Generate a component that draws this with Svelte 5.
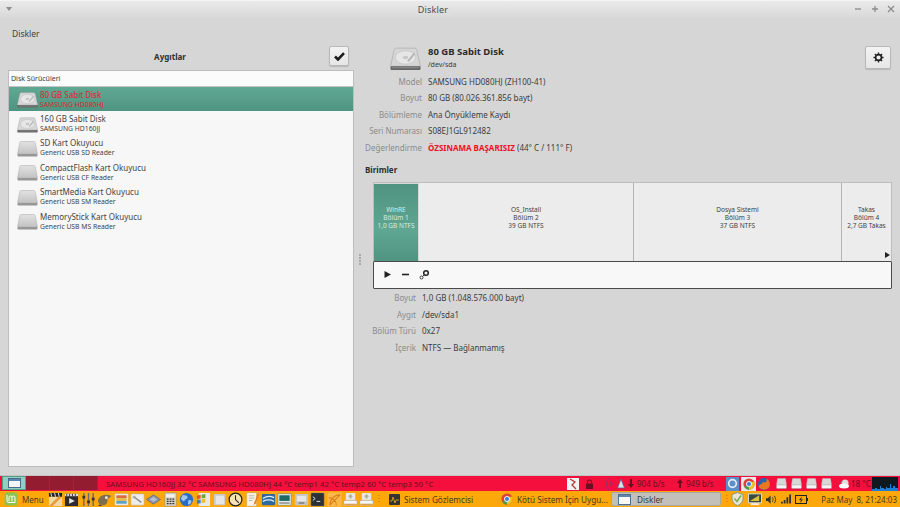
<script>
	const drives = [
		{ name: '80 GB Sabit Disk', model: 'SAMSUNG HD080HJ', hdd: true, selected: true },
		{ name: '160 GB Sabit Disk', model: 'SAMSUNG HD160JJ', hdd: true },
		{ name: 'SD Kart Okuyucu', model: 'Generic USB SD Reader' },
		{ name: 'CompactFlash Kart Okuyucu', model: 'Generic USB CF Reader' },
		{ name: 'SmartMedia Kart Okuyucu', model: 'Generic USB SM Reader' },
		{ name: 'MemoryStick Kart Okuyucu', model: 'Generic USB MS Reader' }
	];
	const parts = [
		{ lines: ['WinRE', 'Bölüm 1', '1,0 GB NTFS'], width: 44, active: true },
		{ lines: ['OS_Install', 'Bölüm 2', '39 GB NTFS'], width: 215 },
		{ lines: ['Dosya Sistemi', 'Bölüm 3', '37 GB NTFS'], width: 208 },
		{ lines: ['Takas', 'Bölüm 4', '2,7 GB Takas'], width: 50 }
	];
	const drive16 = `<rect x="3" y="1" width="10" height="8" rx="1" fill="#e6e6e6"/><path d="M8 2l2.500 3H9v2H7V5H5.500z" fill="#a9a9a9"/><rect x="1" y="9" width="14" height="5" rx="1" fill="#f6f6f6" stroke="#a0a0a0" stroke-width=".5"/><rect x="1.500" y="12.500" width="13" height="1.500" fill="#d8a050"/>`;
	// launcher icons on the bottom panel, inner svg markup on a 16x16 box
	const launchers = [
		`<path d="M1 5h14v10H1z" fill="#f0d8a8"/><path d="M1 15L11 5h4L5 15z" fill="#e59a3c"/><path d="M1 1h14v4H1z" fill="#222"/><path d="M3 1l1 4M7 1l1 4M11 1l1 4" stroke="#eee"/>`,
		`<rect x="1" y="2" width="14" height="13" fill="#2c2c30"/><path d="M1 2h14v2.500H1z" fill="#ddd"/><path d="M3 2v2.500M6 2v2.500M9 2v2.500M12 2v2.500" stroke="#333"/><path d="M5.500 6.500l6 3-6 3z" fill="#e8e8e8"/>`,
		`<path d="M3 1v14M8 1v14M13 1v14" stroke="#6b6b6b" stroke-width="1.500"/><rect x="1.500" y="4" width="3" height="3" fill="#333"/><rect x="6.500" y="9" width="3" height="3" fill="#333"/><rect x="11.500" y="6" width="3" height="3" fill="#333"/>`,
		`<path d="M1 9c2-6 9-7 14-5-1 2-2 3-4 3 1 4-1 7-4 7-4 0-6-2-6-5z" fill="#7c6f50"/><circle cx="10" cy="6" r="1.500" fill="#eee"/><path d="M3 13l-2 2h5" fill="#444"/>`,
		`<rect x="1" y="2" width="14" height="12" fill="#f0efe9" stroke="#bbb" stroke-width=".5"/><rect x="2.500" y="3.500" width="11" height="3" fill="#dc6a42"/><rect x="2.500" y="6.500" width="11" height="3" fill="#e7bb4a"/><rect x="2.500" y="9.500" width="11" height="3" fill="#5aa0c8"/>`,
		`<rect x="1" y="2" width="14" height="12" rx="1" fill="#ececec" stroke="#b0b0b0" stroke-width=".5"/><path d="M4 5l8 6" stroke="#8a8a8a" stroke-width="1.500"/><circle cx="4.500" cy="5.500" r="1.500" fill="#aaa"/>`,
		`<path d="M8 3l7.500 5L8 13 .5 8z" fill="#8793a8" stroke="#4c5870" stroke-width=".6"/><path d="M8 5l4 3-4 2.500L4 8z" fill="#b5bfd0"/>`,
		`<rect x="2" y="1" width="12" height="14" fill="#d8d4c8" stroke="#8a8a80" stroke-width=".5"/><rect x="3.500" y="2.500" width="9" height="3" fill="#f2f2ea"/><path d="M4 7.500h2M7 7.500h2M10 7.500h2M4 10h2M7 10h2M10 10h2M4 12.500h2M7 12.500h2M10 12.500h2" stroke="#333" stroke-width="1.300"/>`,
		`<circle cx="8" cy="8" r="7" fill="#2a6cc4"/><path d="M4 3c2 1 4 0 5 2s-2 2-3 4-3 0-4-2zM10 9c2-1 4 0 3 2s-2 3-3 2 0-3 0-4z" fill="#9cc8f0"/>`,
		`<rect x="3" y="1" width="12" height="14" fill="#e8e8e8"/><path d="M1 4l4-1v4l-4 .500z" fill="#e0562c"/><path d="M6 3l4-1v4l-4 1z" fill="#6aa83c"/><path d="M1 8.500l4-.500v4l-4 .500z" fill="#3c7cd0"/><path d="M6 8l4-1v4l-4 1z" fill="#f0bc28"/>`,
		`<rect x="2" y="2" width="12" height="12" rx="1" fill="#c8c8c8"/><rect x="4" y="4" width="9" height="9" fill="#e6e6e6"/>`,
		`<circle cx="8" cy="8" r="6.800" fill="#f6e4b0" stroke="#222" stroke-width="1.300"/><path d="M8 3.500V8l3.500 3.500" fill="none" stroke="#222" stroke-width="1.100"/>`,
		`<rect x="2" y="1" width="10" height="14" fill="#f8f4e8" stroke="#b8b0a0" stroke-width=".5"/><path d="M4 4h6M4 6.500h6M4 9h4" stroke="#b8b0a0"/><path d="M14 1l-4 10-1 3 2.500-2L15 2z" fill="#e8781c"/>`,
		`<rect x="1" y="2" width="14" height="12" rx="1" fill="#2c699c"/><path d="M2 7c4-3 8-3 12-1M2 10c4-2 8-2 12 0" fill="none" stroke="#e0ecf4" stroke-width="1.300"/>`,
		`<rect x="1" y="2" width="14" height="12" fill="#e4ece8" stroke="#5a7a78" stroke-width=".5"/><rect x="2.500" y="3.500" width="11" height="6" fill="#1f6a66"/><rect x="2.500" y="11" width="11" height="1.500" fill="#888"/>`,
		`<rect x="1" y="2" width="14" height="12" rx="1" fill="#c4c4c4"/><rect x="3" y="4" width="10" height="6" fill="#e6e6e6"/><rect x="5" y="11" width="6" height="1.500" fill="#777"/>`,
		`<rect x="1" y="1" width="14" height="14" rx="1" fill="#2a3238" stroke="#777" stroke-width=".5"/><path d="M3 5l2.500 2L3 9" fill="none" stroke="#eee"/><path d="M7 10h4" stroke="#eee"/>`,
		`<rect x=".5" y=".5" width="15" height="15" fill="#f8b84c"/><path d="M3 14C3 8 8 3 14 3M3 14l11-11M2 6c4 0 8 4 8 8" fill="none" stroke="#e07c14" stroke-width="1.100"/>`,
		drive16,
		drive16
	];
</script>

{#snippet hddIcon(w, h)}
	<svg width={w} height={h} viewBox="0 0 30 22">
		<path d="M6 .5h18c1 0 1.500.6 2 2l3.500 15.500H.5L4 2.500c.5-1.400 1-2 2-2z" fill="#d6d6d6" stroke="#a6a6a6" stroke-width=".6" />
		<ellipse cx="15" cy="9.500" rx="10" ry="6.500" fill="#e6e6e6" stroke="#bcbcbc" stroke-width=".6" />
		<ellipse cx="15" cy="9.500" rx="2.600" ry="1.700" fill="#c6c6c6" />
		<path d="M23 5l-6.500 8 1.800.6 6-7.400z" fill="#b4b4b4" />
		<rect x=".5" y="18" width="29" height="3.600" rx="1" fill="#666" />
		<rect x="2" y="19" width="26" height="1" fill="#8d8d8d" />
	</svg>
{/snippet}

{#snippet cardIcon()}
	<svg width="21" height="16" viewBox="0 0 21 16">
		<defs>
			<linearGradient id="card" x1="0" y1="0" x2="0" y2="1">
				<stop offset="0" stop-color="#e2e2e2" />
				<stop offset="1" stop-color="#c2c2c2" />
			</linearGradient>
		</defs>
		<path d="M4 .5h13c.6 0 1 .4 1.200 1L20.500 13H.5L2.800 1.500C3 .9 3.400.5 4 .5z" fill="url(#card)" stroke="#b4b4b4" stroke-width=".6" />
		<rect x=".5" y="13" width="20" height="2.600" rx=".8" fill="#979797" />
	</svg>
{/snippet}

{#snippet gear(size)}
	<svg width={size} height={size} viewBox="0 0 12 12">
		<circle cx="6" cy="6" r="3.200" fill="none" stroke="#222" stroke-width="1.800" />
		<path d="M6 .5v2M6 9.500v2M.5 6h2M9.500 6h2M2.100 2.100l1.400 1.400M8.500 8.500l1.400 1.400M2.100 9.900l1.400-1.400M8.500 3.500l1.400-1.400" stroke="#222" stroke-width="1.500" />
	</svg>
{/snippet}

{#snippet drive()}
	<svg width="11" height="11" viewBox="0 0 11 11">
		<path d="M1.500 .5h8l1 6.500H.5z" fill="#d8d8d8" stroke="#b8b8b8" stroke-width=".4" />
		<rect x=".5" y="7" width="10" height="3.500" rx=".8" fill="#f4f4f4" stroke="#a0a0a0" stroke-width=".4" />
	</svg>
{/snippet}

{#snippet chrome(size)}
	<svg width={size} height={size} viewBox="0 0 16 16">
		<circle cx="8" cy="8" r="7.500" fill="#d9443a" />
		<path d="M8 8L1.500 11.800A7.500 7.500 0 0 0 8 15.500z" fill="#4aa04a" />
		<path d="M8 8v7.500A7.500 7.500 0 0 0 15 5H8z" fill="#f3c21e" />
		<circle cx="8" cy="8" r="3.400" fill="#3d7fd8" stroke="#fff" stroke-width="1.200" />
	</svg>
{/snippet}

<div class="screen">
	<main class="window">
		<header class="titlebar">
			<span class="menu-arrow"></span>
			<span class="title">Diskler</span>
			<div class="wm-buttons">
				<svg width="8" height="8" viewBox="0 0 8 8"><path d="M1 4h6" stroke="#8c8c8c" stroke-width="1.300" /></svg>
				<svg width="8" height="8" viewBox="0 0 8 8"><path d="M1 4h6M4 1v6" stroke="#8c8c8c" stroke-width="1.300" /></svg>
				<svg width="8" height="8" viewBox="0 0 8 8"><path d="M1 1l6 6M7 1l-6 6" stroke="#8c8c8c" stroke-width="1.300" /></svg>
			</div>
		</header>
		<nav class="menubar">Diskler</nav>

		<div class="content">
			<section class="devices">
				<div class="devices-head">
					<h2>Aygıtlar</h2>
					<button class="tool check" aria-label="Seç">
						<svg width="11" height="9" viewBox="0 0 11 9"><path d="M1 4.500l3 3 6-6.300" fill="none" stroke="#1c1c1c" stroke-width="2.600" /></svg>
					</button>
				</div>
				<div class="list">
					<div class="list-header">Disk Sürücüleri</div>
					{#each drives as d}
						<div class="row" class:selected={d.selected}>
							<span class="row-icon">
								{#if d.hdd}{@render hddIcon(21, 16)}{:else}{@render cardIcon()}{/if}
							</span>
							<div class="row-text">
								<div class="row-name">{d.name}</div>
								<div class="row-model">{d.model}</div>
							</div>
						</div>
					{/each}
				</div>
			</section>

			<div class="grip"><i></i><i></i><i></i><i></i></div>

			<section class="details">
				<div class="drive-head">
					<span class="drive-icon">{@render hddIcon(31, 24)}</span>
					<div class="drive-title">
						<strong>80 GB Sabit Disk</strong>
						<small>/dev/sda</small>
					</div>
					<button class="tool settings" aria-label="Ayarlar">{@render gear(11)}</button>
				</div>

				<dl class="props">
					<dt>Model</dt><dd>SAMSUNG HD080HJ (ZH100-41)</dd>
					<dt>Boyut</dt><dd>80 GB (80.026.361.856 bayt)</dd>
					<dt>Bölümleme</dt><dd>Ana Önyükleme Kaydı</dd>
					<dt>Seri Numarası</dt><dd>S08EJ1GL912482</dd>
					<dt>Değerlendirme</dt><dd><b>ÖZSINAMA BAŞARISIZ</b> (44° C / 111° F)</dd>
				</dl>

				<h3>Birimler</h3>

				<div class="volumes">
					<div class="bar">
						{#each parts as p}
							<div class="part" class:active={p.active} style="width:{p.width}px">
								{#each p.lines as line}<span>{line}</span>{/each}
							</div>
						{/each}
						<span class="more"></span>
					</div>
					<div class="vol-tools">
						<svg width="9" height="9" viewBox="0 0 9 9"><path d="M1.500 1l6.500 3.500L1.500 8z" fill="#222" /></svg>
						<svg width="9" height="9" viewBox="0 0 9 9"><path d="M1 4.500h7" stroke="#222" stroke-width="1.600" /></svg>
						<svg width="11" height="11" viewBox="0 0 11 11">
							<circle cx="7" cy="4" r="2.300" fill="none" stroke="#222" stroke-width="1.500" />
							<circle cx="2.500" cy="8.500" r="1.500" fill="none" stroke="#333" stroke-width=".9" />
							<path d="M3.500 7.500l2-2" stroke="#333" />
						</svg>
					</div>
				</div>

				<dl class="props sub">
					<dt>Boyut</dt><dd>1,0 GB (1.048.576.000 bayt)</dd>
					<dt>Aygıt</dt><dd>/dev/sda1</dd>
					<dt>Bölüm Türü</dt><dd>0x27</dd>
					<dt>İçerik</dt><dd>NTFS — Bağlanmamış</dd>
				</dl>
			</section>
		</div>
	</main>

	<footer class="panels">
		<div class="panel-top">
			<div class="workspaces">
				<span class="ws current">
					<svg width="13" height="10" viewBox="0 0 13 10"><rect x=".5" y=".5" width="12" height="9" fill="#f2f5f7" stroke="#4a6a88" /><rect x="1" y="1" width="11" height="2" fill="#5b86b0" /></svg>
				</span>
				<span class="ws"></span><span class="ws"></span><span class="ws"></span>
			</div>
			<div class="sensors">SAMSUNG HD160JJ 32 °C SAMSUNG HD080HJ 44 °C temp1 42 °C temp2 60 °C temp3 50 °C</div>
			<div class="top-right">
				<svg class="kill" width="12" height="12" viewBox="0 0 12 12"><rect width="12" height="12" fill="#f1f1f1" /><path d="M3 1l5 3-3 3 4 4" fill="none" stroke="#b23a3a" stroke-width="1.300" /></svg>
				<svg class="lock" width="7" height="10" viewBox="0 0 7 10"><path d="M1.500 4.500V3a2 2 0 0 1 4 0v1.500" fill="none" stroke="#6a0f22" stroke-width="1.100" /><rect y="4.500" width="7" height="5.500" fill="#6a0f22" /></svg>
				<div class="net">
					<svg class="arcs" width="8" height="14" viewBox="0 0 8 14"><path d="M3 1a8 8 0 0 0 0 12M5.500 3.500a5 5 0 0 0 0 7" fill="none" stroke="#a02868" /><circle cx="7" cy="7" r="1" fill="#a02868" /></svg>
					<svg class="wifi" width="8" height="11" viewBox="0 0 8 11"><path d="M4 1l3.500 9H.5z" fill="#d8dfe8" stroke="#4c5f90" stroke-width=".7" /></svg>
					<svg class="arrow" width="6" height="9" viewBox="0 0 6 9"><path d="M2 0h2v5h2L3 9 0 5h2z" fill="#6a0f22" /></svg>
					<span class="rate">904 b/s</span>
					<svg class="arrow up" width="6" height="9" viewBox="0 0 6 9"><path d="M2 9h2V4h2L3 0 0 4h2z" fill="#6a0f22" /></svg>
					<span class="rate">949 b/s</span>
				</div>
				<div class="apps">
					<span class="app-box blue"><svg width="11" height="11" viewBox="0 0 13 13"><circle cx="6.500" cy="6.500" r="4.500" fill="none" stroke="#e5eef8" stroke-width="2" /></svg></span>
					<span class="app-box chrome">{@render chrome(12)}</span>
					<span class="app-box fox"><svg width="14" height="14" viewBox="0 0 15 15"><circle cx="7.500" cy="7.500" r="6.500" fill="#2c63a8" /><path d="M2 10c1 4 8 5 11 1 2-4 0-8-3-9 1 2 0 4-2 4-2-1-3 0-3 2-2 0-2-1-3 2z" fill="#e8791f" /></svg></span>
				</div>
				<div class="drives">
					{@render drive()}{@render drive()}{@render drive()}{@render drive()}
				</div>
				<svg class="cloud" width="10" height="10" viewBox="0 0 10 10"><circle cx="6" cy="4" r="3.500" fill="#dcdcdc" /><ellipse cx="5" cy="7" rx="5" ry="2.500" fill="#fafafa" /><path d="M1 4l3-2.500" stroke="#777" stroke-width=".7" /></svg>
				<span class="temp">18 °C</span>
				<div class="graph">
					<svg width="26" height="13" viewBox="0 0 26 13" preserveAspectRatio="none"><path d="M0 13V11h3V10h2V11h3V8h1V10h3V11h2V9h1V10h3V6h1V10h2V8h2V10h3v3z" fill="#1c7fd8" /></svg>
				</div>
			</div>
		</div>
		<div class="panel-bottom">
			<div class="start">
				<svg width="14" height="14" viewBox="0 0 14 14"><rect x=".5" y=".5" width="13" height="13" rx="2.500" fill="#8cc251" /><path d="M3 3v5.500a2 2 0 0 0 2 2h6V5.500a1.500 1.500 0 0 0-3 0v4M8 5.500a1.500 1.500 0 0 0-3 0v3.500" fill="none" stroke="#fff" /></svg>
				<span>Menu</span>
			</div>
			<div class="launchers">
				{#each launchers as icon}
					<svg width="15" height="15" viewBox="0 0 16 16">{@html icon}</svg>
				{/each}
			</div>
			<span class="dots"></span>
			<div class="tasks">
				<div class="task monitor">
					<svg width="11" height="11" viewBox="0 0 11 11"><rect width="11" height="11" rx="1" fill="#333" /><path d="M1 7h2l1-4 2 6 1-3h3" fill="none" stroke="#e8b020" stroke-width=".8" /></svg>
					<span>Sistem Gözlemcisi</span>
				</div>
				<div class="task browser">
					{@render chrome(12)}
					<span>Kötü Sistem İçin Uygu...</span>
				</div>
				<div class="task active">
					<svg width="13" height="11" viewBox="0 0 13 11"><rect x=".5" y=".5" width="12" height="10" fill="#f6f8fa" stroke="#50708e" /><rect x="1" y="1" width="11" height="2" fill="#5b86b0" /></svg>
					<span>Diskler</span>
				</div>
			</div>
			<span class="dots tray-dots"></span>
			<div class="tray">
				<svg width="13" height="14" viewBox="0 0 13 14"><path d="M6.500 .5l5.500 2v4c0 3.500-2.500 6-5.500 7-3-1-5.500-3.500-5.500-7v-4z" fill="#e5e5da" stroke="#8a9a70" /><path d="M3.500 6.500l2.500 3 4-6" fill="none" stroke="#7bab3c" stroke-width="1.500" /></svg>
				<svg width="14" height="13" viewBox="0 0 15 13"><rect x=".5" y=".5" width="14" height="9.500" fill="#3a4a40" stroke="#ddd" /><path d="M2 8l10-6v6z" fill="#d8c23a" /><rect x="3" y="10.500" width="9" height="2" fill="#eee" /></svg>
				<svg width="11" height="11" viewBox="0 0 12 11"><path d="M0 4h2l3-3v9L2 7H0z" fill="#333" /><path d="M7 3c1 1.500 1 3.500 0 5M9 1.500c2 2.500 2 5.500 0 8" fill="none" stroke="#333" /></svg>
				<svg width="10" height="10" viewBox="0 0 11 10"><path d="M0 8h2v2H0zM3 6h2v4H3zM6 3h2v7H6zM9 0h2v10H9z" fill="#333" /></svg>
				<svg width="13" height="9" viewBox="0 0 13 9"><rect x=".5" y=".5" width="11" height="8" fill="none" stroke="#222" /><rect x="11.500" y="3" width="1.500" height="3" fill="#222" /><path d="M7 1.500L4 5h2l-1 3 3-3.500H6z" fill="#222" /></svg>
			</div>
			<time>Paz May  8, 21:24:03</time>
		</div>
	</footer>
</div>

<style>
	:global(body) {
		margin: 0;
		font-family: 'Noto Sans', sans-serif;
	}
	.screen {
		width: 900px;
		height: 507px;
		overflow: hidden;
		display: flex;
		flex-direction: column;
		background: #d6d6d6;
		color: #3a3a3a;
		font-size: 8px;
	}
	.window {
		flex: 1;
		min-height: 0;
		display: flex;
		flex-direction: column;
		background: #d6d6d6;
	}
	.titlebar {
		height: 18px;
		flex: none;
		display: flex;
		align-items: center;
		background: linear-gradient(#ebebeb, #d8d8d8);
		box-shadow: inset 0 1px #f4f4f4;
	}
	.menu-arrow {
		width: 0;
		height: 0;
		margin-left: 6px;
		border: 3px solid transparent;
		border-top: 4px solid #8d8d8d;
		border-bottom: 0;
	}
	.title {
		flex: 1;
		text-align: center;
		font-size: 9px;
		color: #4c4c4c;
		letter-spacing: 0.2px;
	}
	.wm-buttons {
		display: flex;
		gap: 8.500px;
		margin-right: 5px;
	}
	.menubar {
		height: 28px;
		flex: none;
		padding-left: 12px;
		line-height: 31px;
		font-size: 8.500px;
		color: #3f3f3f;
	}
	.content {
		flex: 1;
		min-height: 0;
		display: flex;
		padding: 0 8px 8px;
	}
	.devices {
		width: 346px;
		flex: none;
		display: flex;
		flex-direction: column;
	}
	.devices-head {
		height: 24px;
		flex: none;
		display: flex;
		align-items: center;
		position: relative;
		justify-content: center;
		padding-right: 22px;
	}
	h2 {
		margin: 0 0 4px;
		font-size: 8px;
		font-weight: 700;
		color: #2e2e2e;
	}
	.tool {
		padding: 0;
		display: flex;
		align-items: center;
		justify-content: center;
		border: 1px solid #b8b8b8;
		border-radius: 2px;
		background: linear-gradient(#f3f3f3, #e6e6e6);
		box-shadow: 0 1px 1px rgba(0, 0, 0, 0.15);
	}
	.check {
		position: absolute;
		right: 5px;
		top: 0;
		width: 20px;
		height: 20px;
	}
	.list {
		flex: 1;
		min-height: 0;
		background: #f7f7f7;
		border: 1px solid #bdbdbd;
	}
	.list-header {
		height: 15px;
		line-height: 15px;
		padding-left: 2px;
		font-size: 7px;
		background: #fbfbfb;
		color: #3c3c3c;
		border-bottom: 1px solid #c4c4c4;
	}
	.row {
		height: 24.400px;
		display: flex;
		align-items: center;
		color: #444;
	}
	.row.selected {
		background: linear-gradient(#61a893, #4f9480);
		color: #e0202c;
	}
	.row-icon {
		width: 31px;
		display: flex;
		justify-content: flex-end;
		padding-right: 2px;
		box-sizing: border-box;
		margin-top: 2px;
	}
	.row-name {
		font-size: 8px;
		line-height: 11px;
	}
	.row-model {
		font-size: 6.800px;
		line-height: 10px;
	}
	.grip {
		width: 11px;
		flex: none;
		display: flex;
		flex-direction: column;
		justify-content: center;
		align-items: center;
		gap: 1px;
		margin-top: 6px;
	}
	.grip i {
		width: 2px;
		height: 2px;
		background: #a8a8a8;
	}
	.details {
		flex: 1;
		min-width: 0;
	}
	.drive-head {
		display: flex;
		align-items: flex-start;
		position: relative;
		height: 27px;
		padding-left: 25px;
	}
	.drive-icon {
		display: block;
		width: 38px;
		margin-top: 1px;
	}
	.drive-title {
		display: flex;
		flex-direction: column;
		margin-top: -1px;
	}
	.drive-title strong {
		font-size: 9.500px;
		line-height: 13px;
		color: #2b2b2b;
	}
	.drive-title small {
		font-size: 7px;
		line-height: 10px;
		margin-top: 2px;
	}
	.settings {
		position: absolute;
		right: 1px;
		top: 0;
		width: 26px;
		height: 23px;
	}
	.props {
		margin: 0;
		display: grid;
		grid-template-columns: 57px 1fr;
		column-gap: 6px;
		grid-auto-rows: 16.500px;
		align-items: center;
	}
	.props dt {
		text-align: right;
		color: #8b8b8b;
	}
	.props dd {
		margin: 0;
		color: #3c3c3c;
	}
	.props b {
		color: #f00f1e;
	}
	h3 {
		margin: 8px 0 0;
		height: 18px;
		line-height: 12px;
		font-size: 8px;
		font-weight: 700;
		color: #2e2e2e;
	}
	.volumes {
		margin-left: 8px;
		width: 519px;
		box-sizing: border-box;
	}
	.bar {
		display: flex;
		height: 79px;
		position: relative;
		border: 1px solid #bdbdbd;
		border-bottom: 0;
		background: #ececec;
		box-sizing: border-box;
	}
	.part {
		box-sizing: border-box;
		flex: none;
		display: flex;
		flex-direction: column;
		align-items: center;
		justify-content: center;
		font-size: 6.500px;
		line-height: 8px;
		color: #3f3f3f;
		border-right: 1px solid #b4b4b4;
		padding-bottom: 8px;
	}
	.part:nth-child(4) {
		border-right: 0;
		flex: 1;
	}
	.part.active {
		background: linear-gradient(#4f9380, #5fa792 60%, #4f9380);
		color: #d6ebe4;
		border: 1px solid #d8d8d8;
		border-width: 1px 1px 0 0;
		width: 45px !important;
	}
	.more {
		position: absolute;
		right: 1px;
		bottom: 3px;
		border: 3px solid transparent;
		border-left: 5px solid #222;
		border-right: 0;
	}
	.vol-tools {
		height: 28px;
		box-sizing: border-box;
		background: #f8f8f8;
		border: 1px solid #4a4a4a;
		border-radius: 1px;
		display: flex;
		align-items: center;
		gap: 9px;
		padding-left: 9px;
	}
	.props.sub {
		margin-top: 1px;
		grid-template-columns: 51px 1fr;
	}
	.panels {
		flex: none;
		height: 32px;
		display: flex;
		flex-direction: column;
		border-top: 1px solid #c4c4c4;
		box-sizing: border-box;
		font-size: 8px;
	}
	.panel-top {
		height: 15px;
		flex: none;
		display: flex;
		align-items: center;
		background: #f50f3c;
		color: #6a0f22;
	}
	.workspaces {
		display: flex;
		align-self: stretch;
		height: 14px;
		margin-left: 2px;
	}
	.ws {
		width: 24px;
		box-sizing: border-box;
		background: #931c30;
		border-right: 1px solid #a82038;
		display: flex;
		align-items: center;
		justify-content: center;
	}
	.ws.current {
		background: #8fd0c0;
		border: 1px solid #5a9c8c;
	}
	.sensors {
		margin-left: 8px;
		flex: 1;
		white-space: nowrap;
		font-size: 7.800px;
	}
	.top-right {
		width: 333px;
		flex: none;
		display: flex;
		align-items: center;
	}
	.kill {
		margin-right: 7px;
	}
	.lock {
		margin-right: 13px;
	}
	.net {
		display: flex;
		align-items: center;
	}
	.wifi {
		margin: 0 3px;
	}
	.rate {
		margin: 0 13px 0 3px;
		width: 27px;
		white-space: nowrap;
	}
	.apps {
		display: flex;
		align-items: center;
	}
	.app-box {
		width: 13px;
		height: 14px;
		display: flex;
		align-items: center;
		justify-content: center;
	}
	.blue {
		background: #5a8fc8;
	}
	.chrome {
		width: 15px;
		margin-left: 2px;
		background: #e9e9e9;
	}
	.fox {
		width: 14px;
		margin-left: 1px;
	}
	.drives {
		display: flex;
		gap: 4px;
		margin: 0 7px 0 5px;
	}
	.temp {
		margin: 0 2px;
		width: 19px;
		white-space: nowrap;
	}
	.graph {
		width: 26px;
		height: 14px;
		background: #101820;
		display: flex;
		align-items: flex-end;
	}
	.panel-bottom {
		flex: 1;
		min-height: 0;
		display: flex;
		align-items: center;
		background: #fca80a;
		color: #4a3a1a;
	}
	.start {
		display: flex;
		align-items: center;
		gap: 4px;
		padding-left: 4px;
		width: 48px;
		box-sizing: border-box;
		flex: none;
	}
	.launchers {
		display: flex;
		gap: 1.400px;
		width: 328px;
		flex: none;
	}
	.dots {
		width: 2px;
		height: 9px;
		margin: 0 9px 0 2px;
		flex: none;
		background: repeating-linear-gradient(#d98f10 0 1px, transparent 1px 3px);
	}
	.tasks {
		display: flex;
		align-items: center;
		flex: none;
	}
	.task {
		display: flex;
		align-items: center;
		gap: 4px;
		height: 14px;
		white-space: nowrap;
		font-size: 8.200px;
	}
	.monitor {
		width: 112px;
	}
	.browser {
		width: 110px;
	}
	.task.active {
		width: 110px;
		box-sizing: border-box;
		padding-left: 6px;
		gap: 6px;
		background: #c2c0b8;
		border: 1px solid #a8a8a0;
		border-radius: 2px;
		color: #3a3a3a;
	}
	.tray-dots {
		margin: 0 3px 0 5px;
	}
	.tray {
		display: flex;
		align-items: center;
		gap: 4px;
		flex: none;
	}
	time {
		margin-left: auto;
		padding-right: 3px;
		white-space: pre;
	}
</style>
